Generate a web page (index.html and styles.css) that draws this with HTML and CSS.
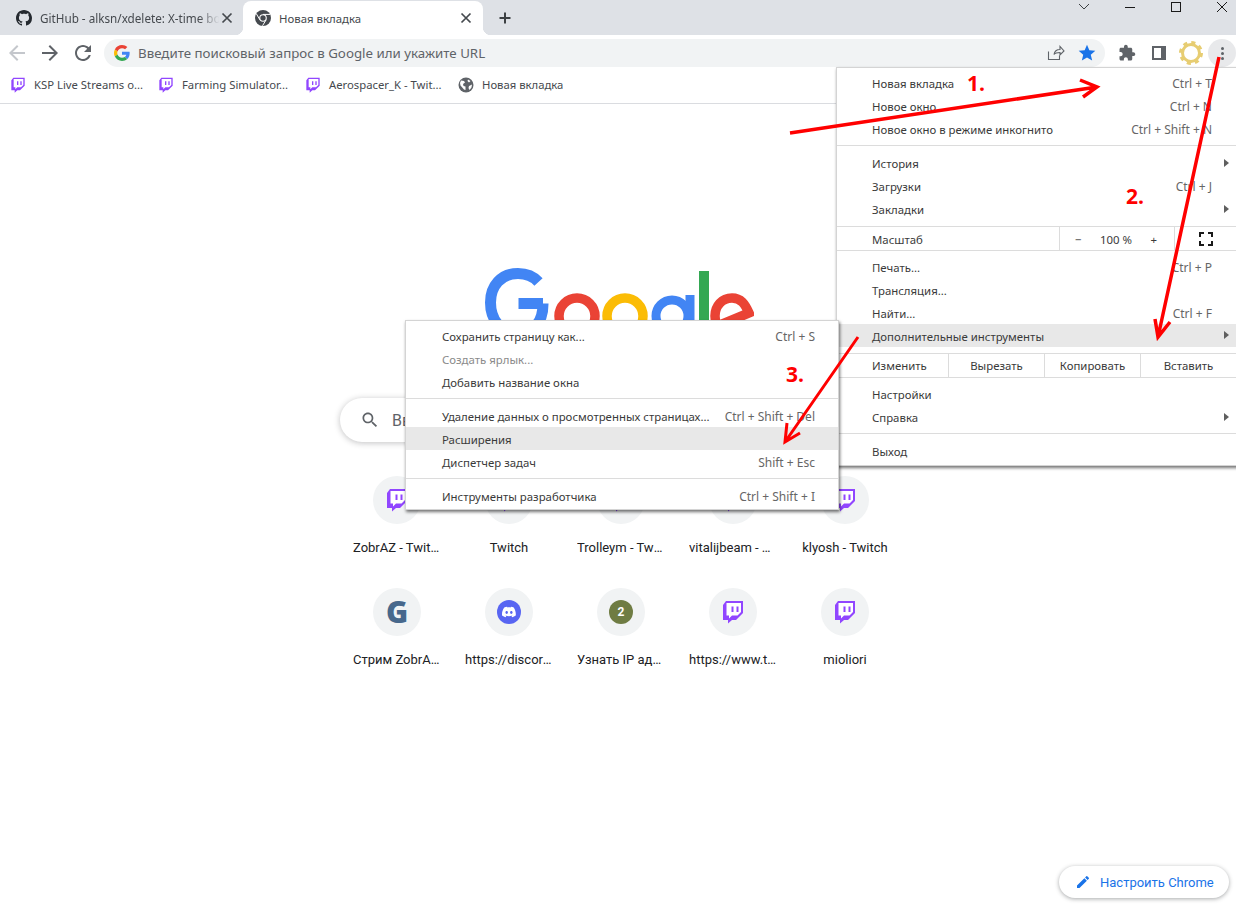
FILE: index.html
```html
<!DOCTYPE html>
<html lang="ru">
<head>
<meta charset="utf-8">
<title>Новая вкладка</title>
<link rel="stylesheet" href="styles.css">
</head>
<body>
<svg class="defs" width="0" height="0" aria-hidden="true">
  <symbol id="twitch" viewBox="0 0 24 24">
    <path fill="#9146ff" d="M5 1 2 5v15h5v3.500L11 20h4l7-7V1z"/>
    <path fill="#fff" d="M5.500 3H20v9l-3.500 3.500H11L8 18.500V15.500H5.500z"/>
    <path fill="#9146ff" d="M10.500 6.500h2v5.500h-2zM15.500 6.500h2v5.500h-2z"/>
  </symbol>
  <symbol id="gfav" viewBox="0 0 48 48">
    <path fill="#EA4335" d="M24 9.500c3.540 0 6.710 1.220 9.210 3.600l6.850-6.850C35.900 2.380 30.470 0 24 0 14.620 0 6.510 5.380 2.560 13.220l7.980 6.190C12.430 13.720 17.740 9.500 24 9.500z"/>
    <path fill="#4285F4" d="M46.980 24.550c0-1.570-.15-3.090-.38-4.550H24v9.020h12.940c-.58 2.960-2.260 5.480-4.780 7.180l7.730 6c4.510-4.180 7.090-10.360 7.090-17.650z"/>
    <path fill="#FBBC05" d="M10.530 28.590c-.48-1.450-.76-2.990-.76-4.590s.27-3.140.76-4.590l-7.980-6.190C.92 16.460 0 20.120 0 24c0 3.880.92 7.540 2.560 10.780l7.970-6.190z"/>
    <path fill="#34A853" d="M24 48c6.480 0 11.930-2.130 15.890-5.810l-7.730-6c-2.150 1.450-4.920 2.300-8.160 2.300-6.260 0-11.570-4.220-13.470-9.910l-7.980 6.190C6.510 42.620 14.620 48 24 48z"/>
  </symbol>
  <symbol id="close" viewBox="0 0 16 16">
    <path d="M3.500 3.500l9 9M12.500 3.500l-9 9" fill="none" stroke="currentColor" stroke-width="1.700"/>
  </symbol>
  <symbol id="globe" viewBox="0 0 16 16">
    <circle cx="8" cy="8" r="7.500" fill="#5f6368"/>
    <path fill="#fff" d="M3 3.500 6 4l1 1.500-2 1.500.5 2 2 .5V13L6 12.500 2.500 8.500 2 6zM10 2.500l2.500 1.500L11 5.500 9.500 4zM11 9l3-1.500-.5 3L11.500 13 10.500 11z"/>
  </symbol>
</svg>

<div class="browser">
  <header class="tabstrip">
    <div class="tab">
      <svg class="fav" viewBox="0 0 16 16"><path fill="#24292f" d="M8 0C3.580 0 0 3.580 0 8c0 3.540 2.290 6.530 5.470 7.590.4.070.55-.17.55-.38 0-.19-.01-.82-.01-1.490-2.010.37-2.530-.49-2.690-.94-.09-.23-.48-.94-.82-1.130-.28-.15-.68-.52-.01-.53.63-.01 1.080.58 1.230.82.72 1.210 1.870.87 2.330.66.07-.52.28-.87.51-1.070-1.780-.2-3.640-.89-3.640-3.950 0-.87.31-1.590.82-2.150-.08-.2-.36-1.020.08-2.120 0 0 .67-.21 2.200.82.64-.18 1.320-.27 2-.27.68 0 1.360.09 2 .27 1.530-1.040 2.200-.82 2.200-.82.44 1.100.16 1.920.08 2.120.51.56.82 1.270.82 2.150 0 3.070-1.870 3.750-3.650 3.950.29.25.54.73.54 1.480 0 1.070-.01 1.930-.01 2.200 0 .21.15.46.55.38A8.013 8.013 0 0016 8c0-4.420-3.580-8-8-8z"/></svg>
      <span class="tab-title fade">GitHub - alksn/xdelete: X-time bootloader</span>
      <svg class="tab-close"><use href="#close"/></svg>
    </div>
    <div class="tab active">
      <svg class="fav" viewBox="0 0 16 16">
        <circle cx="8" cy="8" r="8" fill="#45494e"/>
        <circle cx="8" cy="8" r="3.800" fill="#fff"/>
        <circle cx="8" cy="8" r="2.700" fill="#45494e"/>
        <path d="M8 4.400h7M11.100 9.800l-3.600 6M4.900 9.800 1.300 3.700" stroke="#fff" stroke-width="1"/>
      </svg>
      <span class="tab-title">Новая вкладка</span>
      <svg class="tab-close"><use href="#close"/></svg>
    </div>
    <svg class="newtab" viewBox="0 0 16 16"><path d="M8 2.500v11M2.500 8h11" stroke="#3c4043" stroke-width="2" fill="none"/></svg>
    <div class="winctl">
      <svg viewBox="0 0 46 16"><path d="M18 4l5 5 5-5" fill="none" stroke="#3c4043"/></svg>
      <svg viewBox="0 0 46 16"><path d="M18 7.500h10" fill="none" stroke="#1a1a1a"/></svg>
      <svg viewBox="0 0 46 16"><rect x="18.500" y="2.500" width="9" height="9" fill="none" stroke="#1a1a1a"/></svg>
      <svg viewBox="0 0 46 16"><path d="M18 2l10 10M28 2 18 12" fill="none" stroke="#1a1a1a"/></svg>
    </div>
  </header>

  <div class="toolbar">
    <svg class="tool dim" viewBox="0 0 24 24"><path d="M20 11H7.830l5.590-5.590L12 4l-8 8 8 8 1.410-1.410L7.830 13H20v-2z"/></svg>
    <svg class="tool" viewBox="0 0 24 24"><path d="M12 4l-1.410 1.410L16.170 11H4v2h12.170l-5.580 5.590L12 20l8-8z"/></svg>
    <svg class="tool" viewBox="0 0 24 24"><path d="M17.650 6.350C16.200 4.900 14.210 4 12 4c-4.420 0-7.990 3.580-7.990 8s3.570 8 7.990 8c3.730 0 6.840-2.550 7.730-6h-2.080c-.82 2.330-3.040 4-5.650 4-3.310 0-6-2.690-6-6s2.690-6 6-6c1.660 0 3.140.69 4.220 1.780L13 11h7V4l-2.350 2.350z"/></svg>
    <div class="omnibox">
      <svg class="g-fav"><use href="#gfav"/></svg>
      <span class="omni-text">Введите поисковый запрос в Google или укажите URL</span>
      <svg class="omni-icon" viewBox="0 0 20 20"><path d="M3.500 8.500v8h11v-4M9 11.500c.5-3 2.500-5 6-5V3.500l4 4.500-4 4V9.500c-3 0-5 .5-6 2z" fill="none" stroke="#5f6368" stroke-width="1.100"/></svg>
      <svg class="omni-star" viewBox="0 0 24 24"><path fill="#1a73e8" d="M12 17.270 18.180 21l-1.640-7.030L22 9.240l-7.190-.61L12 2 9.190 8.630 2 9.240l5.460 4.730L5.820 21z"/></svg>
    </div>
    <svg class="ext" viewBox="0 0 24 24"><path fill="#5f6368" d="M20.500 11H19V7c0-1.100-.9-2-2-2h-4V3.500C13 2.120 11.880 1 10.500 1S8 2.120 8 3.500V5H4c-1.100 0-1.990.9-1.990 2v3.800H3.500c1.490 0 2.700 1.210 2.700 2.700s-1.210 2.700-2.700 2.700H2V20c0 1.100.9 2 2 2h3.800v-1.500c0-1.490 1.210-2.700 2.700-2.700 1.490 0 2.700 1.210 2.700 2.700V22H17c1.100 0 2-.9 2-2v-4h1.500c1.380 0 2.500-1.120 2.500-2.500S21.880 11 20.500 11z"/></svg>
    <svg class="panel" viewBox="0 0 14 14"><path fill="#5f6368" d="M0 0h14v14H0z"/><path fill="#fff" d="M2 2h7v10H2z"/></svg>
    <svg class="gear" viewBox="0 0 24 24">
      <circle cx="12" cy="12" r="8.500" fill="none" stroke="#e7cd72" stroke-width="3"/>
      <circle cx="12" cy="12" r="10.500" fill="none" stroke="#e7cd72" stroke-width="3" stroke-dasharray="4.120 4.120"/>
    </svg>
    <div class="menu-btn"><i></i><i></i><i></i></div>
  </div>

  <nav class="bookmarks">
    <span class="bm"><svg class="fav"><use href="#twitch"/></svg><span>KSP Live Streams o...</span></span>
    <span class="bm"><svg class="fav"><use href="#twitch"/></svg><span>Farming Simulator...</span></span>
    <span class="bm"><svg class="fav"><use href="#twitch"/></svg><span>Aerospacer_K - Twit...</span></span>
    <span class="bm"><svg class="fav"><use href="#globe"/></svg><span>Новая вкладка</span></span>
  </nav>

  <main class="ntp">
    <svg class="logo" viewBox="-3 0 272 92" role="img" aria-label="Google">
      <path d="M58 35.500H33.500M58 35.500V36c0 20-11 28.500-25.500 28.500C15 64.500 5.500 51 5.500 34.500S16 5.500 33 5.500c9 0 16 3.500 20.500 8.500" fill="none" stroke="#4285f4" stroke-width="11"/>
      <circle cx="92" cy="48" r="18" fill="none" stroke="#ea4335" stroke-width="9.500"/>
      <circle cx="140" cy="48" r="18" fill="none" stroke="#fbbc05" stroke-width="9.500"/>
      <circle cx="187" cy="48" r="16" fill="none" stroke="#4285f4" stroke-width="9"/>
      <path d="M205 27v36c0 12-8 17-17 17-7 0-12-4-15-10" fill="none" stroke="#4285f4" stroke-width="9"/>
      <path d="M219 3v64" stroke="#34a853" stroke-width="10" fill="none"/>
      <path d="M262 58c-3 5-8 8-14 8-10 0-18-8-18-18s7-18 17-18c9 0 13 6 17 15l-29 12" fill="none" stroke="#ea4335" stroke-width="9.500"/>
    </svg>
    <div class="searchbox">
      <svg class="search-ic" viewBox="0 0 24 24"><path fill="#5f6368" d="M15.500 14h-.79l-.28-.27C15.410 12.590 16 11.110 16 9.500 16 5.910 13.090 3 9.500 3S3 5.910 3 9.500 5.910 16 9.500 16c1.610 0 3.090-.59 4.230-1.570l.27.28v.79l5 4.990L20.490 19l-4.990-5zm-6 0C7.010 14 5 11.990 5 9.500S7.010 5 9.500 5 14 7.010 14 9.500 11.990 14 9.500 14z"/></svg>
      <span>Введите запрос или URL</span>
    </div>
    <div class="tiles">
      <a class="tile"><span class="disc"><svg><use href="#twitch"/></svg></span><span class="label">ZobrAZ - Twitch</span></a>
      <a class="tile"><span class="disc"><svg><use href="#twitch"/></svg></span><span class="label">Twitch</span></a>
      <a class="tile"><span class="disc"><svg><use href="#twitch"/></svg></span><span class="label">Trolleym - Twitch</span></a>
      <a class="tile"><span class="disc"><svg><use href="#twitch"/></svg></span><span class="label">vitalijbeam - Twitch</span></a>
      <a class="tile"><span class="disc"><svg><use href="#twitch"/></svg></span><span class="label">klyosh - Twitch</span></a>
      <a class="tile"><span class="disc"><b class="g-letter">G</b></span><span class="label">Стрим ZobrAZ - Twitch</span></a>
      <a class="tile"><span class="disc"><svg viewBox="0 0 24 24"><circle cx="12" cy="12" r="12" fill="#5865f2"/><g transform="translate(5 5) scale(.583)"><path fill="#fff" d="M20.317 4.370a19.790 19.790 0 0 0-4.885-1.515c-.211.375-.445.865-.608 1.250-1.845-.276-3.680-.276-5.487 0-.164-.393-.406-.875-.618-1.250a19.740 19.740 0 0 0-4.885 1.515C.533 9.046-.319 13.580.099 18.058c2.053 1.508 4.041 2.423 5.993 3.029.462-.630.873-1.295 1.226-1.994-.653-.248-1.274-.55-1.872-.892.126-.094.252-.192.372-.291 3.928 1.793 8.180 1.793 12.061 0 .120.099.246.198.373.292-.598.349-1.220.644-1.873.891.360.698.772 1.363 1.225 1.993 1.961-.607 3.950-1.522 6.002-3.029.500-5.177-.838-9.674-3.548-13.661zM8.020 15.331c-1.183 0-2.157-1.086-2.157-2.419 0-1.333.956-2.419 2.157-2.419 1.211 0 2.176 1.095 2.157 2.419 0 1.333-.956 2.419-2.157 2.419zm7.975 0c-1.183 0-2.157-1.086-2.157-2.419 0-1.333.955-2.419 2.157-2.419 1.211 0 2.176 1.095 2.157 2.419 0 1.333-.946 2.419-2.157 2.419z"/></g></svg></span><span class="label">https://discord.gg/invite</span></a>
      <a class="tile"><span class="disc"><b class="num">2</b></span><span class="label">Узнать IP адрес</span></a>
      <a class="tile"><span class="disc"><svg><use href="#twitch"/></svg></span><span class="label">https://www.twitch.tv</span></a>
      <a class="tile"><span class="disc"><svg><use href="#twitch"/></svg></span><span class="label">mioliori</span></a>
    </div>
  </main>
</div>

<a class="customize">
  <svg viewBox="0 0 24 24"><path fill="#1a73e8" d="M3 17.250V21h3.750L17.810 9.940l-3.750-3.750L3 17.250zM20.710 7.040a1 1 0 0 0 0-1.410l-2.340-2.340a1 1 0 0 0-1.410 0l-1.830 1.830 3.750 3.750 1.830-1.830z"/></svg>
  Настроить Chrome
</a>

<div class="menu main-menu">
  <div class="row"><span>Новая вкладка</span><kbd>Ctrl + T</kbd></div>
  <div class="row"><span>Новое окно</span><kbd>Ctrl + N</kbd></div>
  <div class="row"><span>Новое окно в режиме инкогнито</span><kbd>Ctrl + Shift + N</kbd></div>
  <hr class="sep">
  <div class="row sub"><span>История</span></div>
  <div class="row"><span>Загрузки</span><kbd>Ctrl + J</kbd></div>
  <div class="row sub"><span>Закладки</span></div>
  <hr class="sep sep-zoom">
  <div class="row cells zoom-row">
    <span class="cell-label zoom-label">Масштаб</span>
    <span class="cell zoom-ctl"><span>−</span><span>100 %</span><span>+</span></span>
    <span class="cell zoom-full"><svg viewBox="0 0 14 14"><path d="M1 5V1h4M9 1h4v4M13 9v4H9M5 13H1V9" fill="none" stroke="#1a1a1a" stroke-width="2"/></svg></span>
  </div>
  <hr class="sep sep-after-zoom">
  <div class="row low"><span>Печать...</span><kbd>Ctrl + P</kbd></div>
  <div class="row low"><span>Трансляция...</span></div>
  <div class="row low"><span>Найти...</span><kbd>Ctrl + F</kbd></div>
  <div class="row sub hot low"><span>Дополнительные инструменты</span></div>
  <hr class="sep sep-edit">
  <div class="row cells">
    <span class="cell-label edit-label">Изменить</span>
    <span class="cell edit-btn">Вырезать</span>
    <span class="cell edit-btn">Копировать</span>
    <span class="cell edit-btn">Вставить</span>
  </div>
  <hr class="sep sep-after-edit">
  <div class="row"><span>Настройки</span></div>
  <div class="row sub"><span>Справка</span></div>
  <hr class="sep">
  <div class="row"><span>Выход</span></div>
</div>

<div class="menu sub-menu">
  <div class="row"><span>Сохранить страницу как...</span><kbd>Ctrl + S</kbd></div>
  <div class="row off"><span>Создать ярлык...</span></div>
  <div class="row"><span>Добавить название окна</span></div>
  <hr class="sep sep-sub1">
  <div class="row low"><span>Удаление данных о просмотренных страницах...</span><kbd>Ctrl + Shift + Del</kbd></div>
  <div class="row hot low"><span>Расширения</span></div>
  <div class="row low"><span>Диспетчер задач</span><kbd>Shift + Esc</kbd></div>
  <hr class="sep sep-sub2">
  <div class="row"><span>Инструменты разработчика</span><kbd>Ctrl + Shift + I</kbd></div>
</div>

<svg class="arrows" viewBox="0 0 1236 914" aria-hidden="true">
  <path d="M790 133 1097 87M1080 80l17 7-14 10"/>
  <path d="M1219 57 1158 337M1155 319l3 18 12-15"/>
  <path class="thin" d="M858 337 785 442M800 433l-15 9 2-19"/>
</svg>
<span class="step step1">1.</span>
<span class="step step2">2.</span>
<span class="step step3">3.</span>
</body>
</html>
```

FILE: styles.css
```css
* { box-sizing: border-box; }
html, body { margin: 0; height: 100%; }
body {
  position: relative;
  width: 1236px;
  height: 914px;
  overflow: hidden;
  background: #fff;
  font-family: "Noto Sans", "Open Sans", sans-serif;
  font-size: 11.400px;
  color: #3c4043;
}
.defs { position: absolute; }
.browser { display: flex; flex-direction: column; height: 914px; }

.tabstrip { display: flex; align-items: stretch; height: 35px; background: #dee1e6; padding-left: 8px; flex: none; }
.tab { display: flex; align-items: center; width: 235px; padding: 0 8px 0 8px; position: relative; }
.tab.active { width: 240px; padding: 0 9px 0 12px; background: #fff; border-radius: 8px 8px 0 0; margin-top: 1px; }
.tab.active::before, .tab.active::after { content: ""; position: absolute; bottom: 0; width: 8px; height: 8px; background: radial-gradient(circle at 0 0, transparent 8px, #fff 8.500px); }
.tab.active::before { left: -8px; }
.tab.active::after { right: -8px; transform: scaleX(-1); }
.fav { width: 16px; height: 16px; flex: none; }
.tab-title { flex: 1; margin-left: 8px; white-space: nowrap; overflow: hidden; color: #45494e; }
.tab-title.fade { font-size: 11.700px; -webkit-mask-image: linear-gradient(90deg, #000 87%, transparent 98%); mask-image: linear-gradient(90deg, #000 87%, transparent 98%); }
.tab-close { width: 16px; height: 16px; color: #45494e; flex: none; margin-left: -4px; }
.newtab { width: 16px; height: 16px; align-self: center; margin-left: 14px; flex: none; }
.winctl { display: flex; margin-left: auto; margin-right: -9px; height: 16px; }
.winctl svg { width: 46px; height: 16px; }

.toolbar { display: flex; align-items: center; height: 33px; padding: 3px 0 0 5px; flex: none; }
.tool { width: 24px; height: 24px; fill: #5f6368; margin-right: 9px; flex: none; }
.tool.dim { fill: #c4c7cc; }
.omnibox { display: flex; align-items: center; width: 1001px; height: 28px; padding: 0 8px 0 10px; border-radius: 14px; background: #f1f3f4; flex: none; }
.g-fav { width: 16px; height: 16px; flex: none; }
.omni-text { margin-left: 8px; font-size: 13.300px; color: #5f6368; flex: 1; white-space: nowrap; }
.omni-icon { width: 20px; height: 20px; margin-right: 12px; flex: none; }
.omni-star { width: 20px; height: 20px; flex: none; }
.ext { width: 18px; height: 18px; margin-left: 13px; flex: none; }
.panel { width: 14px; height: 14px; margin-left: 16px; flex: none; }
.gear { width: 24px; height: 24px; margin-left: 13px; flex: none; }
.menu-btn { width: 28px; height: 28px; margin-left: 5px; border-radius: 50%; background: #e8e9eb; display: flex; flex-direction: column; align-items: center; justify-content: center; gap: 2px; flex: none; }
.menu-btn i { width: 3px; height: 3px; border-radius: 50%; background: #5f6368; }

.bookmarks { display: flex; align-items: center; height: 36px; border-bottom: 1px solid #dadce0; padding: 0 0 2px 10px; flex: none; font-size: 11.300px; }
.bm { display: flex; align-items: center; color: #45494e; }
.bm .fav { margin-right: 8px; }
.bm:nth-child(1) { width: 148px; }
.bm:nth-child(2) { width: 147px; }
.bm:nth-child(3) { width: 153px; }

.ntp { display: flex; flex-direction: column; align-items: center; padding-top: 164px; flex: 1; }
.logo { width: 272px; height: 92px; display: block; flex: none; }
.searchbox { display: flex; align-items: center; width: 556px; height: 44px; margin-top: 38px; padding: 0 16px 0 20px; background: #fff; border-radius: 22px; box-shadow: 0 1px 6px rgba(32,33,36,.28); font: 16px Roboto, sans-serif; color: #5f6368; flex: none; }
.search-ic { width: 20px; height: 20px; margin-right: 12px; }
.tiles { display: grid; grid-template-columns: repeat(5, 112px); grid-auto-rows: 112px; margin: 34px 0 0 6px; }
.tile { display: flex; flex-direction: column; align-items: center; }
.disc { width: 48px; height: 48px; border-radius: 50%; background: #f1f3f4; display: flex; align-items: center; justify-content: center; flex: none; }
.disc svg { width: 24px; height: 24px; }
.label { width: 88px; margin-top: 15px; font: 13px/18px Roboto, sans-serif; color: #202124; text-align: center; white-space: nowrap; overflow: hidden; text-overflow: ellipsis; }
.g-letter { font: 900 30px/1 "Open Sans", sans-serif; color: #47688c; }
.num { width: 24px; height: 24px; border-radius: 50%; background: #6f7c43; color: #fff; font: 700 12px/24px Roboto, sans-serif; text-align: center; }

.customize { position: absolute; left: 1059px; top: 866px; width: 170px; height: 32px; display: flex; align-items: center; padding-left: 16px; gap: 9px; border-radius: 16px; background: #fff; box-shadow: 0 1px 4px rgba(60,64,67,.45); font: 13px Roboto, sans-serif; color: #1a73e8; }
.customize svg { width: 16px; height: 16px; }

.menu { position: absolute; background: #fff; border: 1px solid #d4d4d4; box-shadow: 1px 2px 3px rgba(0,0,0,.55); color: #3a3a3a; }
.main-menu { left: 836px; top: 67px; width: 402px; padding: 4px 0 2px; }
.sub-menu { left: 405px; top: 320px; width: 434px; padding: 4px 0 1px; }
.row { display: flex; align-items: center; justify-content: space-between; height: 23px; padding: 0 25px 0 35px; position: relative; white-space: nowrap; }
.row.low { padding-top: 2px; }
.sub-menu .row { padding-left: 36px; padding-right: 23px; }
.row kbd { font: 12px "Noto Sans", sans-serif; color: #666; }
.row.off { color: #8a8a8a; }
.row.hot { background: #e8e8e8; }
.row.sub::after { content: ""; position: absolute; right: 8px; top: 7px; border-left: 5px solid #5f5f5f; border-top: 4px solid transparent; border-bottom: 4px solid transparent; }
.sep { border: 0; border-top: 1px solid #dcdcdc; margin: 4px 0 6px; height: 0; }
.sep-zoom { margin: 5px 0 0; }
.sep-after-zoom { margin: 0 0 4px; }
.sep-edit { margin: 6px 0 0; }
.sep-after-edit { margin: 0 0 5px; }
.sep-sub1 { margin: 4px 0 5px; }
.sep-sub2 { margin: 5px 0 6px; }
.row.cells { justify-content: flex-start; padding: 0 0 0 35px; }
.zoom-row .zoom-label { padding-top: 2px; }
.zoom-row .zoom-ctl { padding-top: 1px; }
.cell-label { flex: none; }
.zoom-label { width: 187px; }
.edit-label { width: 76px; }
.cell { display: flex; align-items: center; justify-content: center; height: 23px; border-left: 1px solid #dcdcdc; flex: none; }
.zoom-ctl { width: 115px; justify-content: space-between; padding: 0 17px 0 15px; }
.zoom-full { width: 63px; justify-content: flex-end; padding-right: 24px; }
.zoom-full svg { width: 14px; height: 14px; }
.edit-btn { width: 96px; }

.arrows { position: absolute; inset: 0; width: 1236px; height: 914px; pointer-events: none; }
.arrows path { fill: none; stroke: #f00; stroke-width: 3.500; }
.arrows path.thin { stroke-width: 3; }
.step { position: absolute; font: 700 21px/24px "Open Sans", sans-serif; color: #f00; }
.step1 { left: 967px; top: 71px; }
.step2 { left: 1126px; top: 184px; }
.step3 { left: 786px; top: 362px; }
```
